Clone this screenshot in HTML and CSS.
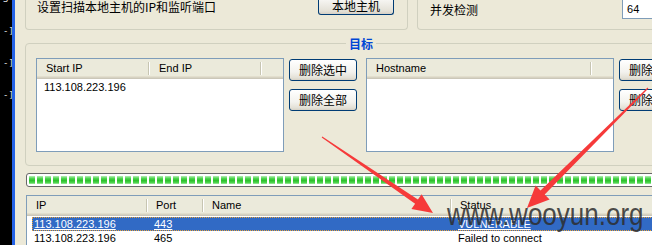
FILE: index.html
```html
<!DOCTYPE html>
<html lang="zh-CN">

<head>
    <meta charset="utf-8" />
    <title>扫描设置</title>
    <link rel="stylesheet" href="styles.css">
</head>

<body>
    <div class="frame">
        <div class="edge">
            <span class="mark first">3</span>
            <span class="mark">-]</span>
            <span class="mark">-]</span>
            <span class="mark">-]</span>
        </div>
        <div class="edge-line"></div>
        <div class="win">
            <div class="top-row">
                <div class="group scan">
                    <span class="cjk label">设置扫描本地主机的IP和监听端口</span>
                    <div class="btn btn-host">本地主机</div>
                </div>
                <div class="group conc">
                    <span class="cjk label">并发检测</span>
                    <div class="input">64</div>
                </div>
            </div>
            <fieldset class="target">
                <legend>目标</legend>
                <div class="target-body">
                    <div class="list">
                        <div class="list-head">
                            <span class="hcol">Start IP</span><span class="hcol">End IP</span>
                        </div>
                        <div class="list-row">113.108.223.196</div>
                    </div>
                    <div class="btns">
                        <div class="btn">删除选中</div>
                        <div class="btn">删除全部</div>
                    </div>
                    <div class="list list2">
                        <div class="list-head">
                            <span class="hcol wide">Hostname</span>
                        </div>
                    </div>
                    <div class="btns">
                        <div class="btn">删除选中</div>
                        <div class="btn">删除全部</div>
                    </div>
                </div>
            </fieldset>
            <div class="progress">
                <div class="progress-fill"></div>
            </div>
            <div class="results">
                <div class="res-head">
                    <span>IP</span><span>Port</span><span>Name</span><span>Status</span>
                </div>
                <div class="res-row selected">
                    <span>113.108.223.196</span><span>443</span><span></span><span>VULNERABLE</span>
                </div>
                <div class="res-row">
                    <span>113.108.223.196</span><span>465</span><span></span><span>Failed to connect</span>
                </div>
            </div>
        </div>
    </div>

    <!-- screenshot markup -->
    <svg class="arrows" width="652" height="245" viewBox="0 0 652 245">
        <polygon points="322.3,136.6 417.9,199.6 421.6,194.3 433,213 411.4,209.1 415.1,203.8 321.7,137.4" />
        <polygon points="648.4,88.4 544.7,194.6 549.6,199.6 527,208 535.6,185.4 540.5,190.4 647.6,87.6" />
    </svg>
    <div class="watermark">www.wooyun.org</div>
</body>

</html>
```

FILE: styles.css
```css
* {
    box-sizing: border-box;
}

body {
    margin: 0;
    width: 652px;
    height: 245px;
    overflow: hidden;
    position: relative;
    background-color: #ece9d8;
    color: #000;
    font: 11px "Liberation Sans", "Noto Sans CJK SC", sans-serif;
}

.cjk,
.btn,
legend {
    font-family: "Noto Sans CJK SC", "Liberation Sans", sans-serif;
    font-size: 12px;
}

.frame {
    display: flex;
    height: 245px;
}

/* left window edge */
.edge {
    flex: none;
    width: 12px;
    background-color: #000;
    color: #e6e6e6;
    display: flex;
    flex-direction: column;
    gap: 23px;
    padding-left: 3px;
    font: 9px "DejaVu Sans Mono", monospace;
    line-height: 9px;
}

.mark {
    height: 9px;
    white-space: pre;
}

.mark.first {
    margin-top: -5px;
}

.edge-line {
    flex: none;
    width: 3px;
    background-color: #2462e6;
}

.win {
    flex: none;
    width: 700px;
    padding-left: 10px;
    display: flex;
    flex-direction: column;
    align-items: flex-start;
}

/* top group boxes */
.top-row {
    display: flex;
    gap: 9px;
    height: 30px;
}

.group {
    height: 30px;
    border: solid 1px #d0d0bf;
    border-top: none;
    border-radius: 0 0 4px 4px;
    display: flex;
    align-items: flex-start;
}

.scan {
    width: 383px;
    padding-left: 11px;
    padding-right: 13px;
}

.scan .label {
    line-height: 14px;
    padding-top: 0;
}

.btn {
    height: 22px;
    width: 68px;
    border: solid 1px #003c74;
    border-radius: 3px;
    background: linear-gradient(#ffffff, #f3f2ee 60%, #e3e0d6 90%, #d6d0c5);
    text-align: center;
    line-height: 20px;
}

.btn-host {
    margin-left: auto;
    width: 76px;
    height: 15px;
    border-top: none;
    border-radius: 0 0 3px 3px;
    line-height: 12px;
    background: linear-gradient(#f6f5f2, #e3e0d6 80%, #d6d0c5);
}

.conc {
    width: 300px;
    padding-left: 12px;
}

.conc .label {
    line-height: 14px;
    padding-top: 3px;
}

.input {
    margin-left: 144px;
    width: 60px;
    height: 19px;
    border: solid 1px #7f9db9;
    border-top: none;
    background-color: #fff;
    padding-left: 4px;
    line-height: 18px;
}

/* 目标 */
.target {
    margin: 6px 0 0 0;
    width: 680px;
    min-width: 0;
    border: solid 1px #d0d0bf;
    border-radius: 4px;
    padding: 7px 0 13px 10px;
}

legend {
    margin-left: 310px;
    padding: 0 3px;
    line-height: 15px;
    font-weight: bold;
    color: #0046d5;
}

.target-body {
    display: flex;
    align-items: flex-start;
}

.list {
    flex: none;
    width: 248px;
    height: 94px;
    border: solid 1px #7f9db9;
    background-color: #fff;
}

.list-head {
    display: flex;
    height: 20px;
    background-color: #ebeadb;
    box-shadow: inset 0 -1px #cbc7b8, inset 0 -2px #d6d2c2, inset 0 -3px #e2decd;
}

.hcol,
.res-head span {
    padding-left: 9px;
    line-height: 19px;
    background-image: linear-gradient(#c7c5b2, #c7c5b2), linear-gradient(#fff, #fff);
    background-size: 1px 13px;
    background-position: right 1px top 3px, right 0 top 3px;
    background-repeat: no-repeat;
}

.hcol {
    width: 113px;
}

.hcol + .hcol {
    width: 112px;
}

.hcol.wide {
    width: 225px;
}

.list-row {
    padding-left: 7px;
    margin-top: 1px;
    line-height: 14px;
}

.btns {
    flex: none;
    display: flex;
    flex-direction: column;
    gap: 8px;
    margin: 1px 9px 0 5px;
}

/* progress */
.progress {
    margin: 7px 0 0 1px;
    width: 640px;
    height: 14px;
    border: solid 1px #686868;
    border-radius: 3px;
    padding: 2px;
    background-color: #fff;
}

.progress-fill {
    height: 8px;
    background:
        linear-gradient(to right, transparent 6px, #fff 6px) 0 0 / 8px 100%,
        linear-gradient(#b8eeb8, #4fd64f 30%, #2cc02c 55%, #47d247 80%, #a4e8a4);
}

/* results */
.results {
    margin: 8px 0 0 1px;
    width: 640px;
    height: 60px;
    border: solid 1px #7f9db9;
    border-bottom: none;
    background-color: #fff;
}

.res-head {
    display: grid;
    grid-template-columns: 121px 56px 248px 1fr;
    height: 20px;
    background-color: #ebeadb;
    box-shadow: inset 0 -1px #cbc7b8, inset 0 -2px #d6d2c2, inset 0 -3px #e2decd;
}

.res-head span + span {
    padding-left: 8px;
}

.res-head span:last-child {
    background-image: none;
}

.res-row {
    display: grid;
    grid-template-columns: 116px 56px 248px 1fr;
    margin-left: 5px;
    height: 14px;
    line-height: 14px;
}

.res-row span {
    padding-left: 6px;
    white-space: nowrap;
}

.res-row span:first-child {
    padding-left: 2px;
}

.res-row.selected {
    margin-top: 1px;
    background-color: #316ac5;
    color: #fff;
    text-decoration: underline;
    outline: 1px dotted #e9a23a;
    outline-offset: -1px;
}

/* overlay from screenshot tool */
.arrows {
    position: absolute;
    left: 0;
    top: 0;
    pointer-events: none;
}

.arrows polygon {
    fill: #f63a3a;
}

.watermark {
    position: absolute;
    left: 447px;
    top: 203px;
    font: 26px "Liberation Sans", sans-serif;
    line-height: 26px;
    color: rgba(45, 45, 45, 0.85);
    transform: scaleY(1.2);
    transform-origin: left 22px;
    white-space: nowrap;
}
```
